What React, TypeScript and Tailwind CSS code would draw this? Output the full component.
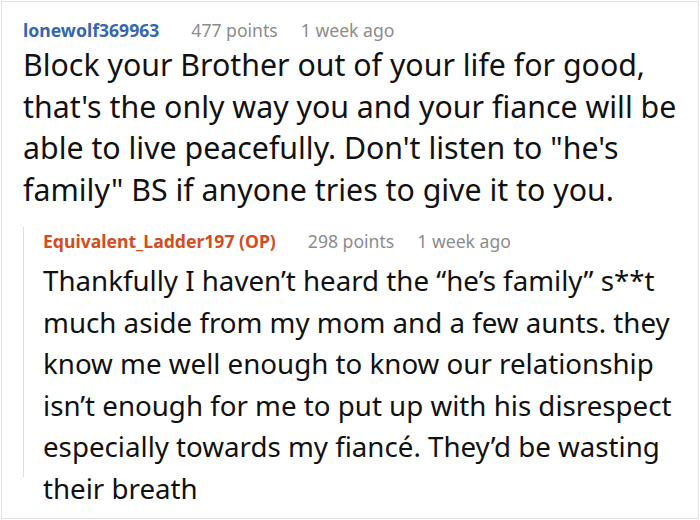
import React from "react";

export default function App() {
  return (
    <div className="w-[700px] h-[520px] bg-white p-px overflow-hidden" style={{ fontFamily: '"Noto Sans", "Open Sans", sans-serif' }}>
      <div className="h-full border border-[#e2e2e2] pt-[14px] pl-[21px] pr-[10px] overflow-hidden">
        <div className="flex items-baseline text-[17.6px] leading-[28px]">
          <span className="font-bold text-[#3566b0]">lonewolf369963</span>
          <span className="ml-[32px] text-[#8c8c8c]">477 points</span>
          <span className="ml-[23px] text-[#8c8c8c]">1 week ago</span>
        </div>
        <p className="text-[30.3px] leading-[41.5px] text-[#111]">
          Block your Brother out of your life for good, that's the only way you and your fiance will be able to live
          peacefully. Don't listen to "he's family" BS if anyone tries to give it to you.
        </p>
        <div className="mt-[26px] border-l border-[#dedede] pl-[19px] h-[250px]">
          <div className="flex items-baseline text-[17.6px] leading-[28px] -mt-[9px]">
            <span className="font-bold text-[#d24d1e]">Equivalent_Ladder197 (OP)</span>
            <span className="ml-[32px] text-[#8c8c8c]">298 points</span>
            <span className="ml-[23px] text-[#8c8c8c]">1 week ago</span>
          </div>
          <p className="mt-[5px] text-[27.7px] leading-[41.5px] text-[#111]">
            Thankfully I haven’t heard the “he’s family” s**t much aside from my mom and a few aunts. they know me well
            enough to know our relationship isn’t enough for me to put up with his disrespect especially towards my
            fiancé. They’d be wasting their breath
          </p>
        </div>
      </div>
    </div>
  );
}
